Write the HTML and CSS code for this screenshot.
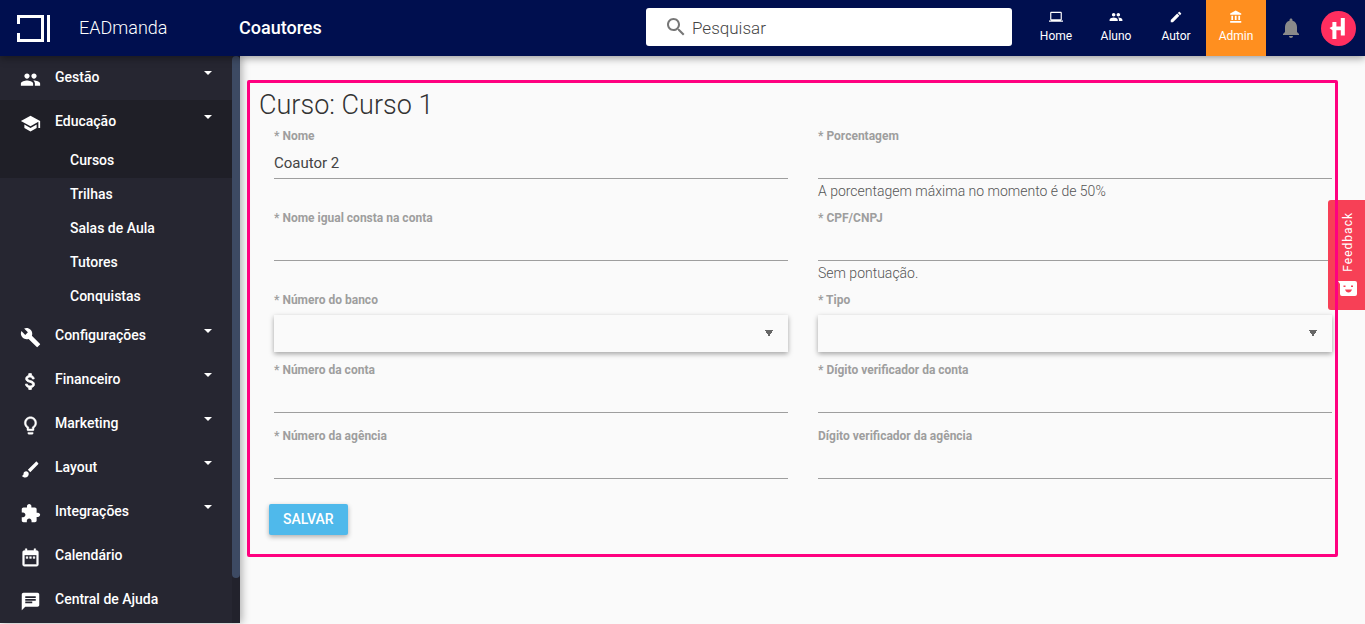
FILE: index.html
```html
<!DOCTYPE html>
<html lang="pt-BR">
<head>
    <meta charset="UTF-8">
    <meta name="viewport" content="width=device-width, initial-scale=1.0">
    <title>EADmanda - Coautores</title>
    <link rel="stylesheet" href="styles.css">
</head>
<body>
    <header class="topbar">
        <a href="#" class="brand">
            <svg class="brand-logo" viewBox="0 0 33 27" aria-hidden="true">
                <path d="M1.5 9V1.5h24v24h-24V18" fill="none" stroke="#fff" stroke-width="3"/>
                <path d="M31.5 0v27" stroke="#fff" stroke-width="3"/>
            </svg>
            <span>EADmanda</span>
        </a>
        <h1 class="page-title">Coautores</h1>

        <label class="search">
            <svg viewBox="0 0 24 24" aria-hidden="true"><path d="M15.5 14h-.79l-.28-.27C15.41 12.59 16 11.11 16 9.5 16 5.91 13.09 3 9.5 3S3 5.91 3 9.5 5.91 16 9.5 16c1.61 0 3.09-.59 4.23-1.57l.27.28v.79l5 4.99L20.49 19l-4.99-5zm-6 0C7.01 14 5 11.99 5 9.5S7.01 5 9.5 5 14 7.01 14 9.5 11.99 14 9.5 14z"/></svg>
            <input type="search" placeholder="Pesquisar" aria-label="Pesquisar">
        </label>

        <nav class="profiles">
            <a href="#">
                <svg viewBox="0 0 24 24" aria-hidden="true"><path d="M20 18c1.1 0 1.99-.9 1.99-2L22 5c0-1.1-.9-2-2-2H4c-1.1 0-2 .9-2 2v11c0 1.1.9 2 2 2H0v2h24v-2h-4zM4 5h16v11H4V5z"/></svg>
                Home
            </a>
            <a href="#">
                <svg viewBox="0 0 24 24" aria-hidden="true"><path d="M16 11c1.66 0 2.99-1.34 2.99-3S17.66 5 16 5s-3 1.34-3 3 1.34 3 3 3zm-8 0c1.66 0 2.99-1.34 2.99-3S9.66 5 8 5 5 6.34 5 8s1.34 3 3 3zm0 2c-2.33 0-7 1.17-7 3.5V19h14v-2.5C15 14.17 10.33 13 8 13zm8 0c-.29 0-.62.02-.97.05 1.16.84 1.97 1.97 1.97 3.45V19h6v-2.5c0-2.33-4.67-3.5-7-3.5z"/></svg>
                Aluno
            </a>
            <a href="#">
                <svg viewBox="0 0 24 24" aria-hidden="true"><path d="M3 17.25V21h3.75L17.81 9.94l-3.75-3.75L3 17.25zM20.71 7.04c.39-.39.39-1.02 0-1.41l-2.34-2.34c-.39-.39-1.02-.39-1.41 0l-1.83 1.83 3.75 3.75 1.83-1.83z"/></svg>
                Autor
            </a>
            <a href="#" class="active">
                <svg viewBox="0 0 24 24" aria-hidden="true"><path d="M4 10v7h3v-7H4zm6 0v7h3v-7h-3zM2 22h19v-3H2v3zm14-12v7h3v-7h-3zM11.5 1L2 6v2h19V6l-9.5-5z"/></svg>
                Admin
            </a>
        </nav>

        <button type="button" class="bell" aria-label="Notificações">
            <svg viewBox="0 0 24 24" aria-hidden="true"><path d="M12 22c1.1 0 2-.9 2-2h-4c0 1.1.89 2 2 2zm6-6v-5c0-3.07-1.64-5.64-4.5-6.32V4c0-.83-.67-1.5-1.5-1.5s-1.5.67-1.5 1.5v.68C7.63 5.36 6 7.92 6 11v5l-2 2v1h16v-1l-2-2z"/></svg>
        </button>
        <a href="#" class="avatar" aria-label="Perfil">
            <svg viewBox="0 0 35 35" aria-hidden="true">
                <circle cx="17.5" cy="17.5" r="17.5" fill="#ff2e5f"/>
                <path d="M11.4 11h4v4.5h4.4V7h4v17.5h-4v-5.3h-4.4V28h-4v-8.8L8.5 17l2.900-1.500z" fill="#fff"/>
            </svg>
        </a>
    </header>

    <div class="layout">
        <aside class="sidebar">
            <ul class="menu">
                <li>
                    <a href="#" class="menu-item has-children">
                        <svg viewBox="0 0 24 24" aria-hidden="true"><path d="M16 11c1.66 0 2.99-1.34 2.99-3S17.66 5 16 5s-3 1.34-3 3 1.34 3 3 3zm-8 0c1.66 0 2.99-1.34 2.99-3S9.66 5 8 5 5 6.34 5 8s1.34 3 3 3zm0 2c-2.33 0-7 1.17-7 3.5V19h14v-2.5C15 14.17 10.33 13 8 13zm8 0c-.29 0-.62.02-.97.05 1.16.84 1.97 1.97 1.97 3.45V19h6v-2.5c0-2.33-4.67-3.5-7-3.5z"/></svg>
                        <span>Gestão</span>
                    </a>
                </li>
                <li>
                    <a href="#" class="menu-item has-children active">
                        <svg viewBox="0 0 24 24" aria-hidden="true"><path d="M5 13.18v4L12 21l7-3.82v-4L12 17l-7-3.82zM12 3L1 9l11 6 9-4.91V17h2V9L12 3z"/></svg>
                        <span>Educação</span>
                    </a>
                    <ul class="submenu">
                        <li><a href="#" class="active">Cursos</a></li>
                        <li><a href="#">Trilhas</a></li>
                        <li><a href="#">Salas de Aula</a></li>
                        <li><a href="#">Tutores</a></li>
                        <li><a href="#">Conquistas</a></li>
                    </ul>
                </li>
                <li>
                    <a href="#" class="menu-item has-children">
                        <svg viewBox="0 0 24 24" aria-hidden="true"><path d="M22.7 19l-9.1-9.1c.9-2.3.4-5-1.5-6.9-2-2-5-2.4-7.4-1.3L9 6 6 9 1.6 4.7C.4 7.1.9 10.1 2.9 12.1c1.9 1.9 4.6 2.4 6.9 1.5l9.1 9.1c.4.4 1 .4 1.4 0l2.3-2.3c.5-.4.5-1.1.1-1.4z"/></svg>
                        <span>Configurações</span>
                    </a>
                </li>
                <li>
                    <a href="#" class="menu-item has-children">
                        <svg viewBox="0 0 24 24" aria-hidden="true"><path d="M11.8 10.9c-2.27-.59-3-1.2-3-2.15 0-1.09 1.01-1.85 2.7-1.85 1.78 0 2.44.85 2.5 2.1h2.21c-.07-1.72-1.12-3.3-3.21-3.81V3h-3v2.16c-1.94.42-3.5 1.68-3.5 3.61 0 2.31 1.91 3.46 4.7 4.13 2.5.6 3 1.48 3 2.41 0 .69-.49 1.79-2.7 1.79-2.06 0-2.87-.92-2.98-2.1h-2.2c.12 2.19 1.76 3.42 3.68 3.83V21h3v-2.15c1.95-.37 3.5-1.5 3.5-3.55 0-2.84-2.43-3.81-4.7-4.4z" stroke="currentColor"/></svg>
                        <span>Financeiro</span>
                    </a>
                </li>
                <li>
                    <a href="#" class="menu-item has-children">
                        <svg viewBox="0 0 24 24" aria-hidden="true"><path d="M9 21c0 .55.45 1 1 1h4c.55 0 1-.45 1-1v-1H9v1zm3-19C8.14 2 5 5.14 5 9c0 2.38 1.19 4.47 3 5.74V17c0 .55.45 1 1 1h6c.55 0 1-.45 1-1v-2.26c1.81-1.27 3-3.36 3-5.74 0-3.86-3.14-7-7-7zm2.85 11.1l-.85.6V16h-4v-2.3l-.85-.6C7.8 12.16 7 10.63 7 9c0-2.76 2.24-5 5-5s5 2.24 5 5c0 1.63-.8 3.16-2.15 4.1z" stroke="currentColor" stroke-width=".5"/></svg>
                        <span>Marketing</span>
                    </a>
                </li>
                <li>
                    <a href="#" class="menu-item has-children">
                        <svg viewBox="0 0 24 24" aria-hidden="true"><path d="M7 14c-1.66 0-3 1.34-3 3 0 1.31-1.16 2-2 2 .92 1.22 2.49 2 4 2 2.21 0 4-1.79 4-4 0-1.66-1.34-3-3-3zm13.71-9.37l-1.34-1.34c-.39-.39-1.02-.39-1.41 0L9 12.25 11.75 15l8.96-8.96c.39-.39.39-1.02 0-1.41z"/></svg>
                        <span>Layout</span>
                    </a>
                </li>
                <li>
                    <a href="#" class="menu-item has-children">
                        <svg viewBox="0 0 24 24" aria-hidden="true"><path d="M20.5 11H19V7c0-1.1-.9-2-2-2h-4V3.5C13 2.12 11.88 1 10.5 1S8 2.12 8 3.5V5H4c-1.1 0-1.99.9-1.99 2v3.8H3.5c1.49 0 2.7 1.21 2.7 2.7s-1.21 2.7-2.7 2.7H2V20c0 1.1.9 2 2 2h3.8v-1.5c0-1.49 1.21-2.7 2.7-2.7 1.49 0 2.7 1.21 2.7 2.7V22H17c1.1 0 2-.9 2-2v-4h1.5c1.38 0 2.5-1.12 2.5-2.5S21.88 11 20.5 11z"/></svg>
                        <span>Integrações</span>
                    </a>
                </li>
                <li>
                    <a href="#" class="menu-item">
                        <svg viewBox="0 0 24 24" aria-hidden="true"><path d="M9 11H7v2h2v-2zm4 0h-2v2h2v-2zm4 0h-2v2h2v-2zm2-7h-1V2h-2v2H8V2H6v2H5c-1.11 0-1.99.9-1.99 2L3 20c0 1.1.89 2 2 2h14c1.1 0 2-.9 2-2V6c0-1.1-.9-2-2-2zm0 16H5V9h14v11z" stroke="currentColor" stroke-width=".5"/></svg>
                        <span>Calendário</span>
                    </a>
                </li>
                <li>
                    <a href="#" class="menu-item">
                        <svg viewBox="0 0 24 24" aria-hidden="true"><path d="M20 2H4c-1.1 0-1.99.9-1.99 2L2 22l4-4h14c1.1 0 2-.9 2-2V4c0-1.1-.9-2-2-2zM6 9h12v2H6V9zm8 5H6v-2h8v2zm4-6H6V6h12v2z"/></svg>
                        <span>Central de Ajuda</span>
                    </a>
                </li>
            </ul>
            <div class="scroll-track"><div class="scroll-thumb"></div></div>
        </aside>

        <main class="content">
            <form class="card">
                <h2>Curso: Curso 1</h2>
                <div class="fields">
                    <div class="field">
                        <label for="nome">* Nome</label>
                        <input type="text" id="nome" value="Coautor 2">
                    </div>
                    <div class="field">
                        <label for="porcentagem">* Porcentagem</label>
                        <input type="text" id="porcentagem">
                        <p class="hint">A porcentagem máxima no momento é de 50%</p>
                    </div>
                    <div class="field">
                        <label for="nome-conta">* Nome igual consta na conta</label>
                        <input type="text" id="nome-conta">
                    </div>
                    <div class="field">
                        <label for="cpf">* CPF/CNPJ</label>
                        <input type="text" id="cpf">
                        <p class="hint">Sem pontuação.</p>
                    </div>
                    <div class="field">
                        <label for="banco">* Número do banco</label>
                        <select id="banco"><option></option></select>
                    </div>
                    <div class="field">
                        <label for="tipo">* Tipo</label>
                        <select id="tipo"><option></option></select>
                    </div>
                    <div class="field">
                        <label for="conta">* Número da conta</label>
                        <input type="text" id="conta">
                    </div>
                    <div class="field">
                        <label for="conta-digito">* Dígito verificador da conta</label>
                        <input type="text" id="conta-digito">
                    </div>
                    <div class="field">
                        <label for="agencia">* Número da agência</label>
                        <input type="text" id="agencia">
                    </div>
                    <div class="field">
                        <label for="agencia-digito">Dígito verificador da agência</label>
                        <input type="text" id="agencia-digito">
                    </div>
                </div>
                <button type="submit" class="btn-save">SALVAR</button>
            </form>
        </main>
    </div>

    <button type="button" class="feedback">
        <span>Feedback</span>
        <svg viewBox="0 0 19 15" aria-hidden="true">
            <path d="M0 0h17a2 2 0 0 1 2 2v11a2 2 0 0 1-2 2H4a2 2 0 0 1-2-2V3z" fill="#fff"/>
            <path d="M5.5 4.5h2V6h-2zM13 4.5h2V6h-2zM7 8.5h7q-1 3-3.5 3T7 8.5z" fill="#f74056"/>
        </svg>
    </button>
</body>
</html>
```
FILE: styles.css
```css
* {
    box-sizing: border-box;
}

body {
    margin: 0;
    min-height: 100vh;
    display: flex;
    flex-direction: column;
    padding-bottom: 1px;
    background: #fafafa;
    color: #333;
    font-family: Roboto, "Liberation Sans", sans-serif;
    font-size: 14px;
}

a {
    color: inherit;
    text-decoration: none;
}

ul {
    list-style: none;
    margin: 0;
    padding: 0;
}

svg {
    display: block;
    fill: currentColor;
}

input,
select,
button {
    font-family: inherit;
}

/* Topbar */
.topbar {
    display: flex;
    align-items: center;
    height: 56px;
    padding-right: 9px;
    background: #000f4f;
    color: #fff;
    box-shadow: 0 2px 8px rgba(0, 0, 0, 0.4);
    position: relative;
    z-index: 3;
}

.brand {
    display: flex;
    align-items: center;
    gap: 29px;
    width: 239px;
    padding: 0 0 2px 17px;
    font-size: 18px;
    font-weight: 300;
}

.brand-logo {
    width: 33px;
    height: 27px;
    margin-top: 2px;
}

.page-title {
    margin: 0;
    padding-bottom: 2px;
    font-size: 18px;
    font-weight: 500;
}

.search {
    display: flex;
    align-items: center;
    gap: 4px;
    width: 366px;
    height: 38px;
    margin: 0 14px 2px auto;
    padding: 0 18px;
    background: #fff;
    border-radius: 3px;
    color: #777;
}

.search svg {
    width: 24px;
    height: 24px;
}

.search input {
    flex: 1;
    min-width: 0;
    padding: 2px 0 0;
    border: none;
    outline: none;
    background: none;
    font-size: 17px;
    font-weight: 300;
}

.search input::placeholder {
    color: #444;
}

.profiles {
    display: flex;
    align-self: stretch;
}

.profiles a {
    display: flex;
    flex-direction: column;
    align-items: center;
    justify-content: center;
    gap: 4px;
    width: 60px;
    padding-bottom: 2px;
    font-size: 12px;
    line-height: 16px;
}

.profiles svg {
    width: 14px;
    height: 14px;
}

.profiles .active {
    background: #ff8f1f;
}

.bell {
    margin: 0 18px 0 13px;
    padding: 0;
    border: none;
    background: none;
    color: #8a8a8a;
    cursor: pointer;
}

.bell svg {
    width: 24px;
    height: 24px;
}

.avatar svg {
    width: 35px;
    height: 35px;
}

/* Sidebar */
.layout {
    display: flex;
    flex: 1;
}

.sidebar {
    display: flex;
    width: 240px;
    background: #262631;
    color: #fff;
    box-shadow: 2px 0 8px rgba(0, 0, 0, 0.3);
}

.menu {
    flex: 1;
}

.menu-item {
    display: flex;
    align-items: center;
    gap: 14px;
    height: 44px;
    padding: 0 20px 2px;
    font-weight: 500;
}

.menu-item svg {
    width: 21px;
    height: 21px;
    margin-top: 4px;
}

.has-children::after {
    content: "";
    margin-left: auto;
    margin-bottom: 8px;
    border: 4px solid transparent;
    border-top-color: #fff;
    border-bottom: none;
}

.menu .active {
    background: #1f1f27;
}

.submenu a {
    display: block;
    padding: 0 0 2px 70px;
    line-height: 32px;
    font-weight: 500;
}

.scroll-track {
    width: 8px;
    background: #22222c;
}

.scroll-thumb {
    height: 92%;
    background: #3d4a63;
    border-radius: 4px;
}

/* Form */
.content {
    flex: 1;
    min-width: 0;
    padding: 24px 27px 24px 7px;
}

.card {
    position: relative;
    padding: 11px 6px 22px 12px;
}

/* outline stays above the feedback tab */
.card::after {
    content: "";
    position: absolute;
    inset: 0;
    z-index: 2;
    border: 3px solid #ff0080;
    border-radius: 2px;
    pointer-events: none;
}

.card h2 {
    margin: 0 0 9px;
    color: #333;
    font-size: 27px;
    font-weight: 300;
    line-height: 28px;
}

.fields {
    display: grid;
    grid-template-columns: 1fr 1fr;
    gap: 7px 30px;
    padding-left: 15px;
}

.field label {
    display: block;
    color: #9e9e9e;
    font-size: 12px;
    font-weight: 700;
    line-height: 16px;
}

.field input {
    display: block;
    width: 100%;
    height: 35px;
    margin-bottom: 8px;
    padding: 4px 0 0;
    border: none;
    border-bottom: 1px solid #9e9e9e;
    outline: none;
    background: transparent;
    color: #444;
    font-size: 15px;
}

.field .hint {
    margin: -8px 0 0;
    color: #555;
    font-weight: 300;
    line-height: 24px;
}

.field select {
    display: block;
    width: 100%;
    height: 37px;
    margin: 7px 0 3px;
    padding: 0 16px;
    border: none;
    appearance: none;
    background-color: #fafafa;
    background-image: linear-gradient(to bottom left, #666 50%, transparent 50%), linear-gradient(to bottom right, #666 50%, transparent 50%);
    background-position: right 19px center, right 15px center;
    background-repeat: no-repeat;
    background-size: 4px 7px;
    box-shadow: 0 2px 5px rgba(0, 0, 0, 0.35);
}

.btn-save {
    display: block;
    height: 31px;
    margin: 17px 0 0 10px;
    padding: 0 14px 2px;
    border: none;
    border-radius: 2px;
    background: #4fb9eb;
    color: #fff;
    font-size: 14px;
    font-weight: 500;
    box-shadow: 0 2px 5px rgba(0, 0, 0, 0.3);
    cursor: pointer;
}

/* Feedback tab */
.feedback {
    position: fixed;
    top: 200px;
    right: 0;
    z-index: 1;
    display: flex;
    flex-direction: column;
    align-items: center;
    justify-content: space-between;
    width: 37px;
    height: 110px;
    padding: 12px 0 14px 2px;
    border: none;
    border-radius: 3px 0 0 3px;
    background: #f74056;
    color: #fff;
    font-size: 12px;
    letter-spacing: 1px;
    cursor: pointer;
}

.feedback span {
    writing-mode: vertical-rl;
    transform: rotate(180deg);
}

.feedback svg {
    width: 19px;
    height: 15px;
}
```
